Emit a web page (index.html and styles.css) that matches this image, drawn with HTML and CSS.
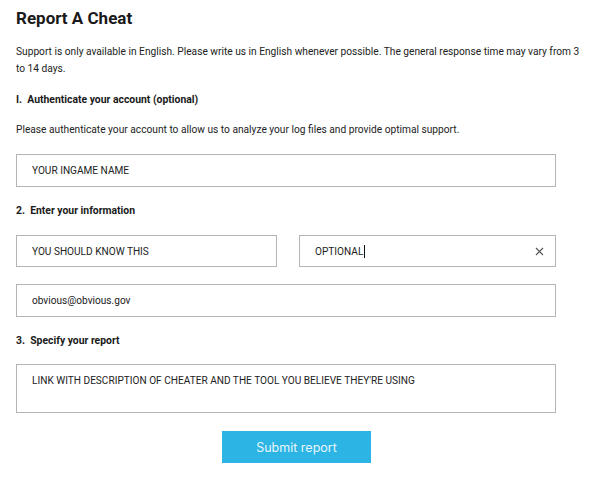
FILE: index.html
```html
<!DOCTYPE html>
<html>
<head>
<meta charset="utf-8">
<link rel="stylesheet" href="styles.css">
</head>
<body>
<div class="page">
  <h1 class="title">Report A Cheat</h1>
  <p class="text intro">Support is only available in English. Please write us in English whenever possible. The general response time may vary from 3 to 14 days.</p>
  <h2 class="step">I.&nbsp; Authenticate your account (optional)</h2>
  <p class="text auth">Please authenticate your account to allow us to analyze your log files and provide optimal support.</p>
  <div class="field">YOUR INGAME NAME</div>
  <h2 class="step">2.&nbsp; Enter your information</h2>
  <div class="row">
    <div class="field">YOU SHOULD KNOW THIS</div>
    <div class="field active"><span>OPTIONAL<span class="caret"></span></span><svg class="clear" width="9" height="9" viewBox="0 0 9 9"><path d="M1 1L8 8M8 1L1 8" stroke="#555" stroke-width="1.1" fill="none"/></svg></div>
  </div>
  <div class="field email">obvious@obvious.gov</div>
  <h2 class="step">3.&nbsp; Specify your report</h2>
  <div class="field area">LINK WITH DESCRIPTION OF CHEATER AND THE TOOL YOU BELIEVE THEY'RE USING</div>
  <div class="actions"><button class="submit">Submit report</button></div>
</div>
</body>
</html>
```
FILE: styles.css
```css
html, body { margin: 0; padding: 0; background: #fff; }
.page {
  width: 540px;
  padding: 8px 16px 0 16px;
  font-family: Roboto, "Liberation Sans", sans-serif;
  color: #222;
}
.title {
  margin: 0;
  font-family: Roboto, "Liberation Sans", sans-serif;
  font-size: 17px;
  line-height: 20px;
  font-weight: 700;
  color: #1a1a1a;
}
.text {
  margin: 0;
  font-size: 10.2px;
  line-height: 17px;
  color: #222;
}
.intro { margin-top: 15px; width: 567px; }
.step {
  margin: 15px 0 0 0;
  font-family: Roboto, "Liberation Sans", sans-serif;
  font-size: 10.4px;
  line-height: 15px;
  font-weight: 700;
  color: #1a1a1a;
}
.auth { margin-top: 14px; }
.field {
  box-sizing: border-box;
  height: 33px;
  border: 1px solid #b4b4b4;
  padding: 0 15px;
  display: flex;
  align-items: center;
  font-size: 10.1px;
  color: #222;
  margin-top: 15px;
}
.auth + .field { margin-top: 16px; }
.row {
  display: flex;
  gap: 22px;
  margin-top: 17px;
}
.row .field { flex: 1 1 0; min-width: 0; margin-top: 0; height: 32px; }
.active { justify-content: space-between; padding-right: 11px; }
.caret {
  display: inline-block;
  width: 1px;
  height: 13px;
  background: #111;
  vertical-align: -3px;
  margin-left: 1px;
}
.clear { display: block; }
.email { margin-top: 17px; height: 33px; }
.field + .step { margin-top: 16px; }
.area {
  height: 49px;
  align-items: flex-start;
  padding-top: 10px;
  margin-top: 16px;
}
.actions {
  display: flex;
  margin-top: 18px;
}
.submit {
  margin-left: 206px;
  width: 149px;
  height: 32px;
  border: none;
  background: #2bb4e4;
  color: #e8f6fc;
  font-family: Inter, "Liberation Sans", sans-serif;
  font-size: 12.5px;
  padding: 0;
}
```
